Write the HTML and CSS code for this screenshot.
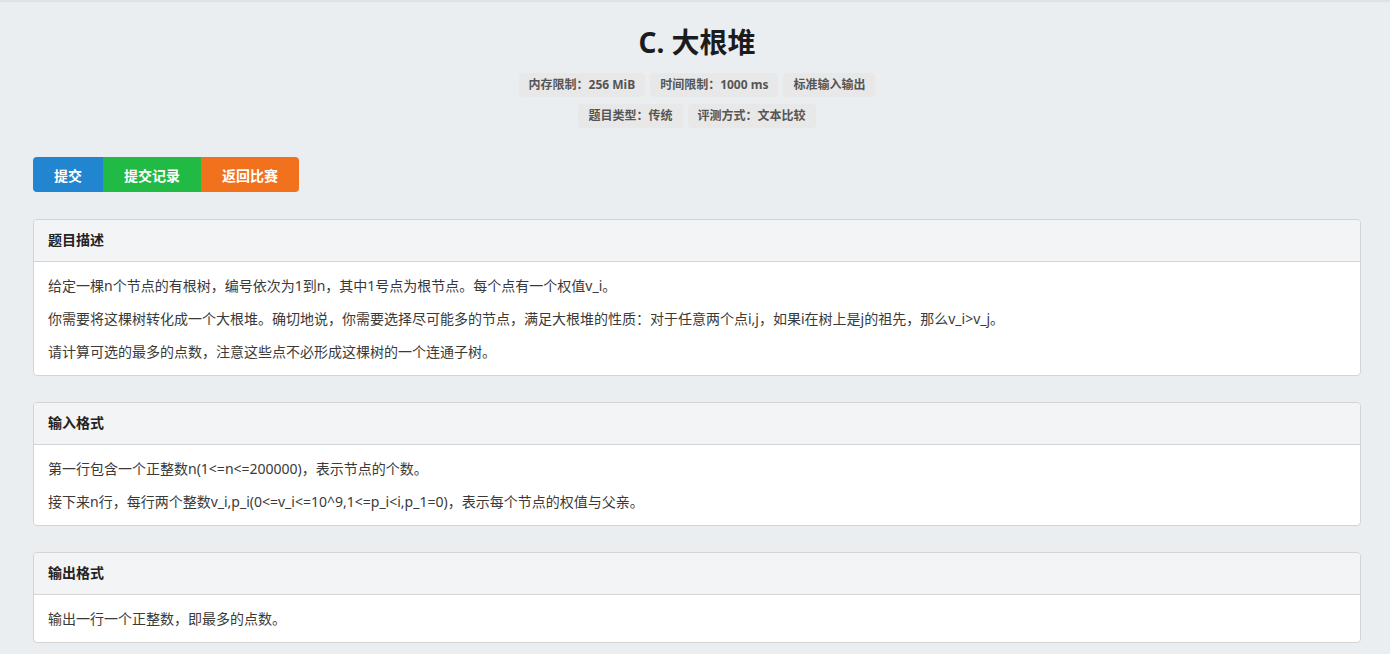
FILE: index.html
```html
<!DOCTYPE html>
<html lang="zh-CN">
<head>
<meta charset="utf-8">
<title>C. 大根堆</title>
<link rel="stylesheet" href="styles.css">
</head>
<body>
<div class="page">
  <div class="head">
    <h1 class="title">C. 大根堆</h1>
    <div class="labels">
      <span class="label">内存限制：256 MiB</span>
      <span class="label">时间限制：1000 ms</span>
      <span class="label">标准输入输出</span>
    </div>
    <div class="labels">
      <span class="label">题目类型：传统</span>
      <span class="label">评测方式：文本比较</span>
    </div>
  </div>
  <div class="buttons">
    <a class="btn blue">提交</a>
    <a class="btn green">提交记录</a>
    <a class="btn orange">返回比赛</a>
  </div>
  <div class="card">
    <div class="card-head">题目描述</div>
    <div class="card-body">
      <p>给定一棵n个节点的有根树，编号依次为1到n，其中1号点为根节点。每个点有一个权值v_i。</p>
      <p>你需要将这棵树转化成一个大根堆。确切地说，你需要选择尽可能多的节点，满足大根堆的性质：对于任意两个点i,j，如果i在树上是j的祖先，那么v_i&gt;v_j。</p>
      <p>请计算可选的最多的点数，注意这些点不必形成这棵树的一个连通子树。</p>
    </div>
  </div>
  <div class="card">
    <div class="card-head">输入格式</div>
    <div class="card-body">
      <p>第一行包含一个正整数n(1&lt;=n&lt;=200000)，表示节点的个数。</p>
      <p>接下来n行，每行两个整数v_i,p_i(0&lt;=v_i&lt;=10^9,1&lt;=p_i&lt;i,p_1=0)，表示每个节点的权值与父亲。</p>
    </div>
  </div>
  <div class="card">
    <div class="card-head">输出格式</div>
    <div class="card-body">
      <p>输出一行一个正整数，即最多的点数。</p>
    </div>
  </div>
</div>
</body>
</html>
```

FILE: styles.css
```css
html, body {
  margin: 0;
  padding: 0;
}
body {
  background: #ebeef1;
  border-top: 2px solid #dfe3e7;
  font-family: "Noto Sans", "Noto Sans CJK SC", sans-serif;
  font-size: 14px;
  color: #3a3a3a;
}
.page {
  padding: 22px 29px 20px 33px;
}
.head {
  display: flex;
  flex-direction: column;
  align-items: center;
}
.title {
  margin: 0 0 13px;
  font-size: 28px;
  line-height: 36px;
  font-weight: 700;
  color: #1b1c1d;
}
.labels {
  display: flex;
  gap: 5px;
  justify-content: center;
  margin-bottom: 7px;
}
.label {
  background: #e8e8e8;
  color: #555;
  font-size: 12px;
  font-weight: 700;
  line-height: 14px;
  padding: 5px 10px;
  border-radius: 4px;
}
.buttons {
  display: flex;
  margin-top: 22px;
}
.btn {
  display: flex;
  align-items: center;
  height: 35px;
  padding: 0 21px;
  color: #fff;
  font-weight: 700;
  font-size: 14px;
}
.btn.blue { background: #2185d0; border-radius: 4px 0 0 4px; }
.btn.green { background: #21ba45; }
.btn.orange { background: #f2711c; border-radius: 0 4px 4px 0; }
.card {
  margin-top: 26px;
  background: #fff;
  border: 1px solid #d4d4d5;
  border-radius: 4px;
}
.buttons + .card { margin-top: 27px; }
.card-head {
  background: #f3f4f5;
  border-bottom: 1px solid #d4d4d5;
  border-radius: 4px 4px 0 0;
  padding: 10px 14px 11px;
  line-height: 20px;
  font-weight: 700;
  color: #222;
}
.card-body {
  padding: 14px 14px 13px;
}
.card-body p {
  margin: 0 0 13px;
  line-height: 20px;
}
.card-body p:last-child {
  margin-bottom: 0;
}
```
